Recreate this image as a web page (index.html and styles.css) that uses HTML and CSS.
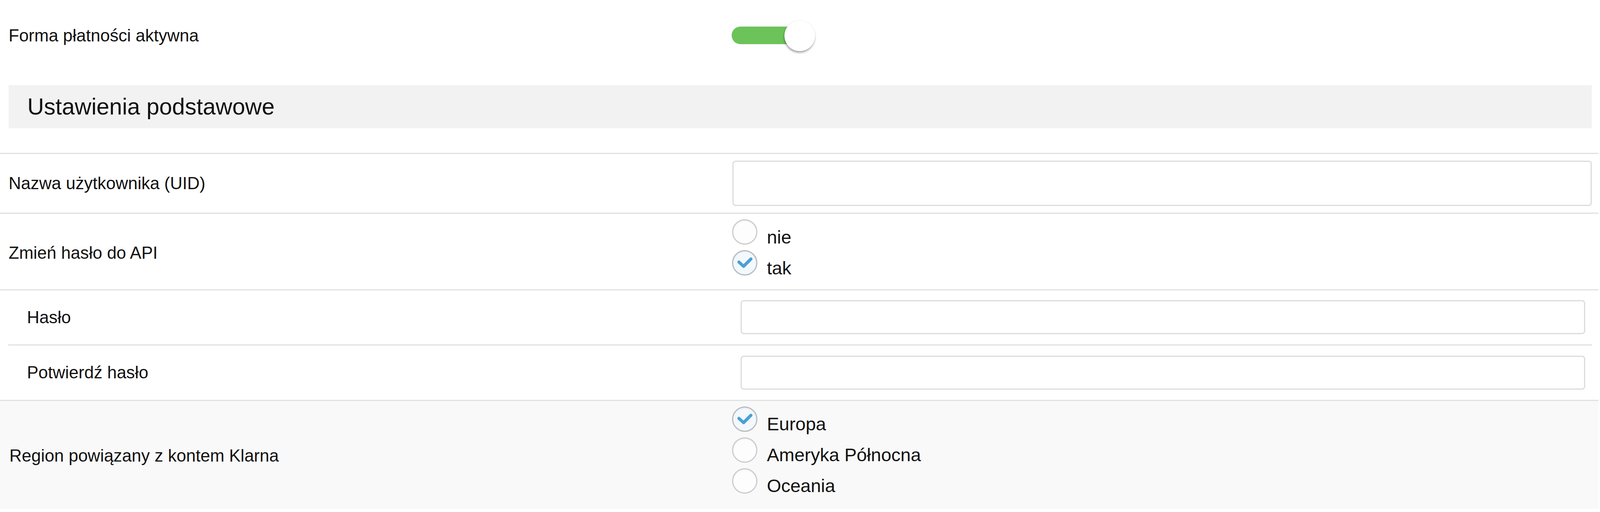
FILE: index.html
```html
<!DOCTYPE html>
<html lang="pl">
<head>
    <meta charset="UTF-8" />
    <title>Klarna - ustawienia</title>
    <link rel="stylesheet" href="styles.css">
</head>
<body>
    <div class="form">
        <div class="row row-toggle">
            <label class="label">Forma płatności aktywna</label>
            <div class="toggle">
                <span class="toggle-track"></span>
                <span class="toggle-thumb"></span>
            </div>
        </div>

        <h2 class="section">Ustawienia podstawowe</h2>

        <div class="row row-uid">
            <label class="label" for="uid">Nazwa użytkownika (UID)</label>
            <input class="field" type="text" id="uid">
        </div>

        <div class="row row-api">
            <label class="label">Zmień hasło do API</label>
            <div class="radios">
                <div class="radio-item"><span class="radio"></span><span class="radio-label">nie</span></div>
                <div class="radio-item">
                    <span class="radio checked">
                        <svg viewBox="0 0 66 66"><path d="M18 31 L30 42 L49 23" fill="none" stroke="#4aa0d5" stroke-width="8" stroke-linecap="round" stroke-linejoin="round"/></svg>
                    </span>
                    <span class="radio-label">tak</span>
                </div>
            </div>
        </div>

        <div class="sub">
            <div class="sub-inner">
                <div class="row row-sub">
                    <label class="label" for="pass">Hasło</label>
                    <input class="field field-small" type="password" id="pass">
                </div>
                <div class="row row-sub row-sub-next">
                    <label class="label" for="pass2">Potwierdź hasło</label>
                    <input class="field field-small" type="password" id="pass2">
                </div>
            </div>
        </div>

        <div class="row row-region">
            <label class="label">Region powiązany z kontem Klarna</label>
            <div class="radios">
                <div class="radio-item">
                    <span class="radio checked">
                        <svg viewBox="0 0 66 66"><path d="M18 31 L30 42 L49 23" fill="none" stroke="#4aa0d5" stroke-width="8" stroke-linecap="round" stroke-linejoin="round"/></svg>
                    </span>
                    <span class="radio-label">Europa</span>
                </div>
                <div class="radio-item"><span class="radio"></span><span class="radio-label">Ameryka Północna</span></div>
                <div class="radio-item"><span class="radio"></span><span class="radio-label">Oceania</span></div>
            </div>
        </div>
    </div>
</body>
</html>
```

FILE: styles.css
```css
body {
    margin: 0;
    background: #ffffff;
    font-family: "Liberation Sans", Arial, sans-serif;
    color: #111111;
    overflow: hidden;
}
.form {
    margin-right: 4px;
}
.row {
    display: grid;
    grid-template-columns: 45.78vw minmax(0, 1fr);
    align-items: center;
    box-sizing: border-box;
    padding-right: 17px;
    border-top: 3px solid #e1e1e1;
}
.label {
    font-size: 44px;
    padding-left: 22px;
}
.row-toggle {
    height: 182px;
    border-top: none;
}

/* przełącznik */
.toggle {
    position: relative;
    width: 215px;
    height: 79px;
    margin-left: -2px;
}
.toggle-track {
    display: block;
    width: 193px;
    height: 45px;
    margin-top: 16px;
    border-radius: 23px;
    background: #6cc35a;
}
.toggle-thumb {
    position: absolute;
    left: 135px;
    top: 0;
    width: 79px;
    height: 79px;
    border-radius: 50%;
    background: #ffffff;
    box-shadow: -1px 4px 5px rgba(0, 0, 0, 0.35), 0 0 1px rgba(0, 0, 0, 0.2);
}

.section {
    margin: 35.5px 17px 63px 22px;
    height: 110.5px;
    padding-left: 48px;
    display: flex;
    align-items: center;
    background: #f2f2f2;
    font-size: 59px;
    font-weight: normal;
    color: #111111;
}

.field {
    display: block;
    width: 100%;
    min-width: 0;
    box-sizing: border-box;
    height: 115.5px;
    border: 3px solid #dcdcdc;
    border-radius: 8px;
    background: #ffffff;
    font-size: 40px;
    padding: 0 20px;
    outline: none;
}
.field-small {
    height: 87px;
}

.row-uid {
    height: 153px;
}
.row-api {
    height: 195.5px;
}
.row-api .label {
    padding-top: 8px;
}

.radios {
    align-self: start;
    padding-top: 14px;
    margin-left: -1px;
}
.radio-item {
    display: flex;
    height: 79px;
}
.radio {
    flex: none;
    width: 65px;
    height: 65px;
    box-sizing: border-box;
    border: 3px solid #cdcdcd;
    border-radius: 50%;
    background: #fdfdfd;
    box-shadow: inset 0 2px 3px rgba(0, 0, 0, 0.05);
    position: relative;
}
.radio.checked {
    border-color: #b9bcbf;
    background: #f3f8fc;
}
.radio svg {
    position: absolute;
    left: -3px;
    top: -3px;
    width: 65px;
    height: 65px;
}
.radio-label {
    font-size: 47px;
    line-height: 47px;
    margin-left: 24px;
    margin-top: 21.5px;
}

.sub {
    border-top: 3px solid #e1e1e1;
}
.sub-inner {
    margin: 0 16px 0 21px;
}
.row-sub {
    height: 138px;
    border-top: none;
    padding-right: 18px;
}
.row-sub .label {
    padding-left: 48px;
}
.row-sub-next {
    height: 142px;
    border-top: 3px solid #e1e1e1;
}

.row-region {
    height: 279px;
    background: #f9f9f9;
    padding-bottom: 10px;
}
.row-region .label {
    padding-left: 24px;
    padding-top: 14px;
}
```
